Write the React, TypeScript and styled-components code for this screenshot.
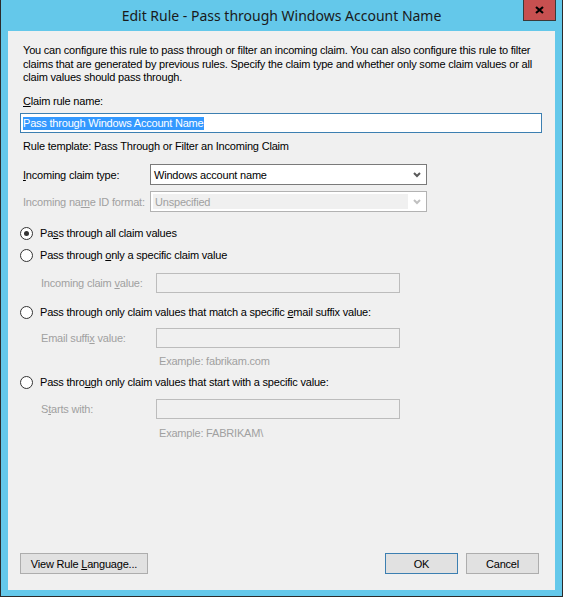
import React from "react";
import styled, { createGlobalStyle } from "styled-components";

const GlobalStyle = createGlobalStyle`
  html, body {
    margin: 0;
    padding: 0;
    background: #64c8ea;
  }
  body {
    font-family: "Liberation Sans", Arial, sans-serif;
    font-size: 11px;
    letter-spacing: -0.2px;
    color: #000;
  }
`;

const Window = styled.div`
  box-sizing: border-box;
  width: 563px;
  height: 597px;
  background: #64c8ea;
  border: 1px solid #2b2b2b;
  border-top: none;
  display: flex;
  flex-direction: column;
`;

const TitleBar = styled.div`
  height: 31px;
  flex: none;
  display: grid;
  grid-template-columns: 1fr auto 1fr;
  align-items: start;
`;

const Title = styled.div`
  grid-column: 2;
  font-family: "Noto Sans", "Open Sans", sans-serif;
  font-size: 14px;
  letter-spacing: 0;
  line-height: 31px;
  color: #1a1a1a;
  white-space: nowrap;
`;

const CloseButton = styled.div`
  grid-column: 3;
  justify-self: end;
  margin-right: 6px;
  box-sizing: border-box;
  width: 33px;
  height: 21px;
  background: #c75050;
  border: 1px solid #3a3a3a;
  border-top: none;
  display: flex;
  align-items: center;
  justify-content: center;
`;

const Client = styled.div`
  flex: 1;
  margin: 0 7px 6px 7px;
  background: #f0f0f0;
  padding: 13px 13px 16px 12px;
  display: flex;
  flex-direction: column;
`;

const Intro = styled.p`
  margin: 0;
  padding-left: 3px;
  line-height: 13.5px;
  white-space: nowrap;
`;

const Text = styled.div<{ $top: number; $indent?: number; $muted?: boolean }>`
  margin-top: ${(p) => p.$top}px;
  padding-left: ${(p) => p.$indent ?? 3}px;
  line-height: 13px;
  color: ${(p) => (p.$muted ? "#a0a0a0" : "#000")};
  white-space: nowrap;
`;

const Key = styled.span`
  text-decoration: underline;
  text-underline-offset: 1px;
`;

const NameBox = styled.div`
  margin-top: 5.5px;
  box-sizing: border-box;
  height: 20px;
  background: #fff;
  border: 1px solid #3c7fb1;
  padding: 0 2px;
  display: flex;
  align-items: center;
`;

const Selected = styled.span`
  background: #3399ff;
  color: #fff;
  line-height: 13px;
`;

const FieldRow = styled.div<{ $top: number; $muted?: boolean }>`
  margin-top: ${(p) => p.$top}px;
  display: grid;
  grid-template-columns: 130px 277px;
  align-items: center;
  height: 21px;
  color: ${(p) => (p.$muted ? "#a0a0a0" : "#000")};
`;

const FieldLabel = styled.div`
  padding-left: 3px;
  white-space: nowrap;
`;

const Combo = styled.div<{ $disabled?: boolean }>`
  box-sizing: border-box;
  height: 21px;
  background: #fff;
  border: 1px solid ${(p) => (p.$disabled ? "#b2b2b2" : "#7a7a7a")};
  padding: ${(p) => (p.$disabled ? "2px 0 2px 2px" : "0 0 0 3px")};
  display: flex;
  align-items: center;
`;

const ComboValue = styled.div<{ $disabled?: boolean }>`
  flex: 1;
  align-self: stretch;
  display: flex;
  align-items: center;
  background: ${(p) => (p.$disabled ? "#f0f0f0" : "transparent")};
  padding-left: ${(p) => (p.$disabled ? "2px" : "0")};
  color: ${(p) => (p.$disabled ? "#a0a0a0" : "#000")};
`;

const ComboArrow = styled.div`
  width: 18px;
  display: flex;
  align-items: center;
  justify-content: center;
`;

const RadioRow = styled.div<{ $top: number }>`
  margin-top: ${(p) => p.$top}px;
  height: 16px;
  display: flex;
  align-items: center;
  gap: 7px;
  white-space: nowrap;
`;

const RadioCircle = styled.span<{ $checked?: boolean }>`
  box-sizing: border-box;
  width: 13px;
  height: 13px;
  border-radius: 50%;
  border: 1px solid #333;
  background: #fff;
  display: flex;
  align-items: center;
  justify-content: center;
  &::after {
    content: "";
    display: ${(p) => (p.$checked ? "block" : "none")};
    width: 5px;
    height: 5px;
    border-radius: 50%;
    background: #333;
  }
`;

const SubRow = styled.div<{ $top: number }>`
  margin-top: ${(p) => p.$top}px;
  display: grid;
  grid-template-columns: 136px 244px;
  align-items: center;
  height: 20px;
  color: #a0a0a0;
`;

const SubLabel = styled.div`
  padding-left: 21px;
  white-space: nowrap;
`;

const DisabledBox = styled.div`
  box-sizing: border-box;
  height: 20px;
  border: 1px solid #bcbcbc;
  background: #f0f0f0;
`;

const Footer = styled.div`
  margin-top: auto;
  display: flex;
  align-items: center;
  padding-right: 3px;
`;

const Button = styled.div<{ $width: number; $default?: boolean }>`
  box-sizing: border-box;
  width: ${(p) => p.$width}px;
  height: 21px;
  background: #e1e1e1;
  border: 1px solid ${(p) => (p.$default ? "#3c7fb1" : "#adadad")};
  display: flex;
  align-items: center;
  justify-content: center;
  white-space: nowrap;
`;

const Spacer = styled.div`
  flex: 1;
`;

const ButtonGap = styled.div`
  width: 8px;
`;

const Chevron = ({ color }: { color: string }) => (
  <svg width="8" height="6" viewBox="0 0 8 6">
    <polyline points="1,1 4,4 7,1" fill="none" stroke={color} strokeWidth="2" />
  </svg>
);

const CloseGlyph = () => (
  <svg width="9" height="8" viewBox="0 0 9 8">
    <path d="M1 1 L8 7 M8 1 L1 7" stroke="#000" strokeWidth="2.2" />
  </svg>
);

export default function App() {
  return (
    <>
      <GlobalStyle />
      <Window>
        <TitleBar>
          <Title>Edit Rule - Pass through Windows Account Name</Title>
          <CloseButton>
            <CloseGlyph />
          </CloseButton>
        </TitleBar>
        <Client>
          <Intro>
            You can configure this rule to pass through or filter an incoming claim. You can also configure this rule to filter
            <br />
            claims that are generated by previous rules. Specify the claim type and whether only some claim values or all
            <br />
            claim values should pass through.
          </Intro>

          <Text $top={10}>
            <Key>C</Key>laim rule name:
          </Text>
          <NameBox>
            <Selected>Pass through Windows Account Name</Selected>
          </NameBox>

          <Text $top={6.5}>Rule template: Pass Through or Filter an Incoming Claim</Text>

          <FieldRow $top={11.5}>
            <FieldLabel>
              <Key>I</Key>ncoming claim type:
            </FieldLabel>
            <Combo>
              <ComboValue>Windows account name</ComboValue>
              <ComboArrow>
                <Chevron color="#5a5a5a" />
              </ComboArrow>
            </Combo>
          </FieldRow>

          <FieldRow $top={6} $muted>
            <FieldLabel>
              Incoming na<Key>m</Key>e ID format:
            </FieldLabel>
            <Combo $disabled>
              <ComboValue $disabled>Unspecified</ComboValue>
              <ComboArrow>
                <Chevron color="#c0c0c0" />
              </ComboArrow>
            </Combo>
          </FieldRow>

          <RadioRow $top={13}>
            <RadioCircle $checked />
            <span>
              Pa<Key>s</Key>s through all claim values
            </span>
          </RadioRow>

          <RadioRow $top={6}>
            <RadioCircle />
            <span>
              Pass through <Key>o</Key>nly a specific claim value
            </span>
          </RadioRow>

          <SubRow $top={10}>
            <SubLabel>
              Incoming claim <Key>v</Key>alue:
            </SubLabel>
            <DisabledBox />
          </SubRow>

          <RadioRow $top={11}>
            <RadioCircle />
            <span>
              Pass through only claim values that match a specific <Key>e</Key>mail suffix value:
            </span>
          </RadioRow>

          <SubRow $top={8}>
            <SubLabel>
              Email suffi<Key>x</Key> value:
            </SubLabel>
            <DisabledBox />
          </SubRow>

          <Text $top={6.5} $indent={139} $muted>
            Example: fabrikam.com
          </Text>

          <RadioRow $top={6.5}>
            <RadioCircle />
            <span>
              Pass thro<Key>u</Key>gh only claim values that start with a specific value:
            </span>
          </RadioRow>

          <SubRow $top={9}>
            <SubLabel>
              S<Key>t</Key>arts with:
            </SubLabel>
            <DisabledBox />
          </SubRow>

          <Text $top={7.5} $indent={139} $muted>
            Example: FABRIKAM\
          </Text>

          <Footer>
            <Button $width={128}>
              <span>
                View Rule <Key>L</Key>anguage...
              </span>
            </Button>
            <Spacer />
            <Button $width={73} $default>
              OK
            </Button>
            <ButtonGap />
            <Button $width={73}>Cancel</Button>
          </Footer>
        </Client>
      </Window>
    </>
  );
}
